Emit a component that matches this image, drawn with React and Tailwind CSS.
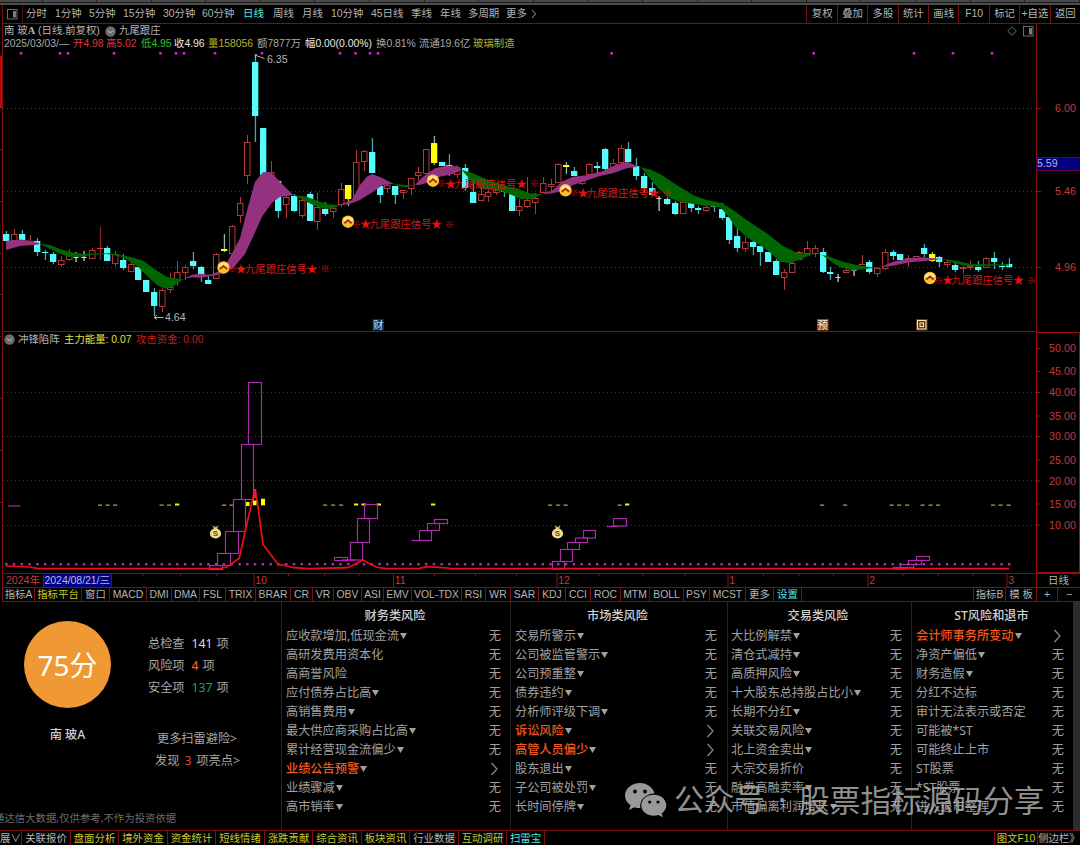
import React from "react";

const CN = "'Liberation Sans', 'Noto Sans CJK SC', sans-serif";

const periods = [
  ["分时", "w-[29px]"],
  ["1分钟", "w-[34px]"],
  ["5分钟", "w-[34px]"],
  ["15分钟", "w-[40px]"],
  ["30分钟", "w-[39px]"],
  ["60分钟", "w-[41px]"],
  ["日线", "w-[30px] text-[#55e6e6]"],
  ["周线", "w-[29px]"],
  ["月线", "w-[29px]"],
  ["10分钟", "w-[40px]"],
  ["45日线", "w-[40px]"],
  ["季线", "w-[29px]"],
  ["年线", "w-[28px]"],
  ["多周期", "w-[38px]"],
  ["更多", "w-[23px]"],
];

const tools = ["复权", "叠加", "多股", "统计", "画线", "F10", "标记", "+自选", "返回"];

const quote = [
  ["2025/03/03/—", "w-[69px] text-[#a8a8a8]"],
  ["开4.98", "w-[33px] text-[#d83a3a]"],
  ["高5.02", "w-[35px] text-[#d83a3a]"],
  ["低4.95", "w-[33px] text-[#2cc42c]"],
  ["收4.96", "w-[34px] text-[#e8e8e8]"],
  ["量158056", "w-[49px] text-[#b4b432]"],
  ["额7877万", "w-[48px] text-[#a8a8a8]"],
  ["幅0.00(0.00%)", "w-[71px] text-[#e8e8e8]"],
  ["换0.81%", "w-[43px] text-[#a8a8a8]"],
  ["流通19.6亿", "w-[54px] text-[#a8a8a8]"],
  ["玻璃制造", "w-[44px] text-[#b4b432]"],
];

const indicators = [
  ["指标A", "w-[32px]"],
  ["指标平台", "w-[47px] text-[#c8c832]"],
  ["窗口", "w-[28px]"],
  ["MACD", "w-[37px]"],
  ["DMI", "w-[25px]"],
  ["DMA", "w-[28px]"],
  ["FSL", "w-[26px]"],
  ["TRIX", "w-[30px]"],
  ["BRAR", "w-[35px]"],
  ["CR", "w-[22px]"],
  ["VR", "w-[21px]"],
  ["OBV", "w-[28px]"],
  ["ASI", "w-[22px]"],
  ["EMV", "w-[28px]"],
  ["VOL-TDX", "w-[50px]"],
  ["RSI", "w-[24px]"],
  ["WR", "w-[25px]"],
  ["SAR", "w-[28px]"],
  ["KDJ", "w-[27px]"],
  ["CCI", "w-[25px]"],
  ["ROC", "w-[30px]"],
  ["MTM", "w-[29px]"],
  ["BOLL", "w-[34px]"],
  ["PSY", "w-[26px]"],
  ["MCST", "w-[36px]"],
  ["更多", "w-[28px]"],
  ["设置", "w-[28px] text-[#55e6e6]"],
];

const footer = [
  ["展∨", "w-[22px]"],
  ["关联报价", "w-[49px]"],
  ["盘面分析", "w-[48px] text-[#c8c832]"],
  ["境外资金", "w-[49px] text-[#c8c832]"],
  ["资金统计", "w-[48px] text-[#c8c832]"],
  ["短线情绪", "w-[49px] text-[#c8c832]"],
  ["涨跌贡献", "w-[48px] text-[#c8c832]"],
  ["综合资讯", "w-[49px] text-[#c8c832]"],
  ["板块资讯", "w-[48px] text-[#c8c832]"],
  ["行业数据", "w-[49px]"],
  ["互动调研", "w-[48px] text-[#c8c832]"],
  ["扫雷宝", "w-[38px] text-[#55e6e6]"],
];

// name, has dropdown arrow, is a warning
const risks = [
  {
    title: "财务类风险",
    box: "w-[229px] pl-[4px] pr-[9px]",
    items: [
      ["应收款增加,低现金流", 1],
      ["高研发费用资本化", 0],
      ["高商誉风险", 0],
      ["应付债券占比高", 1],
      ["高销售费用", 1],
      ["最大供应商采购占比高", 1],
      ["累计经营现金流偏少", 1],
      ["业绩公告预警", 1, 1],
      ["业绩骤减", 1],
      ["高市销率", 1],
    ],
  },
  {
    title: "市场类风险",
    box: "w-[217px] pl-[4px] pr-[10px]",
    items: [
      ["交易所警示", 1],
      ["公司被监管警示", 1],
      ["公司预重整", 1],
      ["债券违约", 1],
      ["分析师评级下调", 1],
      ["诉讼风险", 1, 1],
      ["高管人员偏少", 1, 1],
      ["股东退出", 1],
      ["子公司被处罚", 1],
      ["长时间停牌", 1],
    ],
  },
  {
    title: "交易类风险",
    box: "w-[184px] pl-[3px] pr-[9px]",
    items: [
      ["大比例解禁", 1],
      ["清仓式减持", 1],
      ["高质押风险", 1],
      ["十大股东总持股占比小", 1],
      ["长期不分红", 1],
      ["关联交易风险", 1],
      ["北上资金卖出", 1],
      ["大宗交易折价", 0],
      ["融券高融卖率", 1],
      ["市值偏离利润增长", 1],
    ],
  },
  {
    title: "ST风险和退市",
    box: "w-[162px] pl-[4px] pr-[9px]",
    items: [
      ["会计师事务所变动", 1, 1],
      ["净资产偏低", 1],
      ["财务造假", 1],
      ["分红不达标", 0],
      ["审计无法表示或否定", 0],
      ["可能被*ST", 0],
      ["可能终止上市", 0],
      ["ST股票", 0],
      ["*ST股票", 0],
      ["进入退市整理", 0],
    ],
  },
];

// kind, high, body top, body bottom, low
const candles = [
  ["d", 231, 234, 241, 241],
  ["u", 229, 234, 241, 241],
  ["d", 230, 234, 240, 241],
  ["u", 235, 241, 243, 243],
  ["d", 238, 241, 252, 256],
  ["d", 250, 252, 253, 260],
  ["d", 252, 254, 262, 264],
  ["u", 256, 260, 265, 267],
  ["u", 249, 252, 260, 261],
  ["w", 252, 257, 257, 262],
  ["w", 251, 257, 257, 261],
  ["u", 248, 250, 259, 259],
  ["r", 227, 248, 249, 260],
  ["d", 246, 248, 261, 261],
  ["u", 251, 254, 264, 266],
  ["d", 254, 260, 268, 270],
  ["u", 262, 264, 272, 272],
  ["d", 267, 267, 280, 280],
  ["d", 280, 280, 292, 292],
  ["d", 288, 292, 306, 316],
  ["u", 288, 290, 307, 312],
  ["u", 273, 287, 290, 293],
  ["u", 261, 272, 280, 286],
  ["u", 265, 267, 273, 280],
  ["d", 252, 261, 266, 269],
  ["d", 266, 267, 277, 282],
  ["d", 276, 280, 284, 284],
  ["u", 253, 254, 279, 279],
  ["y", 234, 249, 251, 252],
  ["u", 225, 226, 254, 254],
  ["u", 197, 203, 216, 223],
  ["u", 135, 142, 176, 184],
  ["d", 54, 62, 116, 142],
  ["d", 128, 128, 175, 175],
  ["u", 161, 172, 177, 177],
  ["d", 180, 181, 211, 218],
  ["u", 196, 197, 205, 218],
  ["d", 194, 196, 211, 212],
  ["u", 196, 200, 216, 218],
  ["d", 192, 194, 221, 221],
  ["u", 193, 207, 222, 230],
  ["d", 202, 209, 214, 216],
  ["u", 207, 208, 212, 218],
  ["u", 183, 189, 205, 207],
  ["y", 185, 185, 199, 206],
  ["u", 150, 162, 200, 200],
  ["u", 150, 151, 162, 171],
  ["d", 138, 152, 173, 173],
  ["d", 186, 186, 195, 203],
  ["u", 184, 185, 189, 193],
  ["d", 186, 186, 195, 204],
  ["u", 190, 190, 193, 199],
  ["u", 178, 178, 189, 195],
  ["u", 167, 172, 176, 181],
  ["u", 149, 149, 174, 174],
  ["y", 136, 143, 163, 165],
  ["d", 162, 162, 166, 166],
  ["d", 154, 165, 167, 176],
  ["u", 165, 167, 175, 178],
  ["d", 164, 168, 188, 191],
  ["d", 178, 192, 203, 203],
  ["u", 187, 194, 201, 201],
  ["u", 190, 192, 197, 202],
  ["u", 189, 190, 193, 195],
  ["d", 186, 188, 192, 197],
  ["d", 193, 193, 211, 211],
  ["u", 199, 206, 211, 216],
  ["u", 177, 200, 207, 208],
  ["u", 193, 198, 203, 214],
  ["u", 177, 183, 193, 193],
  ["u", 179, 184, 187, 192],
  ["u", 163, 164, 183, 183],
  ["y", 162, 165, 167, 174],
  ["d", 167, 171, 176, 176],
  ["u", 178, 178, 184, 185],
  ["u", 163, 164, 175, 175],
  ["d", 162, 166, 168, 174],
  ["d", 148, 149, 169, 170],
  ["u", 159, 163, 169, 169],
  ["u", 145, 148, 163, 163],
  ["d", 142, 149, 162, 162],
  ["d", 158, 166, 176, 180],
  ["d", 173, 176, 188, 193],
  ["d", 182, 188, 195, 195],
  ["w", 196, 198, 198, 211],
  ["d", 197, 199, 204, 205],
  ["d", 201, 203, 214, 215],
  ["u", 202, 202, 214, 214],
  ["d", 203, 203, 208, 212],
  ["d", 206, 208, 210, 214],
  ["u", 206, 207, 211, 212],
  ["d", 205, 206, 207, 212],
  ["d", 203, 209, 218, 220],
  ["d", 217, 217, 240, 244],
  ["d", 228, 236, 248, 252],
  ["u", 237, 242, 249, 252],
  ["d", 239, 242, 247, 255],
  ["d", 246, 246, 252, 266],
  ["d", 252, 252, 262, 262],
  ["d", 259, 261, 275, 275],
  ["u", 269, 272, 278, 290],
  ["u", 262, 263, 273, 273],
  ["u", 251, 252, 260, 260],
  ["u", 241, 248, 254, 254],
  ["u", 245, 248, 254, 257],
  ["d", 248, 252, 272, 273],
  ["d", 267, 272, 274, 280],
  ["w", 274, 277, 277, 282],
  ["u", 269, 270, 273, 273],
  ["w", 269, 270, 270, 276],
  ["u", 255, 264, 267, 267],
  ["d", 260, 262, 272, 274],
  ["u", 267, 268, 274, 277],
  ["u", 249, 252, 269, 270],
  ["d", 250, 252, 256, 260],
  ["d", 254, 254, 260, 260],
  ["u", 255, 258, 260, 267],
  ["u", 256, 256, 259, 259],
  ["d", 244, 248, 254, 257],
  ["y", 252, 254, 261, 262],
  ["d", 256, 257, 262, 267],
  ["u", 260, 262, 265, 267],
  ["d", 263, 265, 270, 272],
  ["u", 266, 267, 269, 274],
  ["u", 261, 266, 268, 270],
  ["d", 261, 267, 270, 272],
  ["u", 257, 258, 268, 268],
  ["d", 252, 258, 262, 269],
  ["d", 262, 266, 267, 270],
  ["d", 258, 264, 267, 268],
];

const bands = [
  ["#943280", "6,241 20,239.5 30,240.7 39,243 39,244.5 20,246 6,250"],
  ["#006400", "39,243.5 50,245 60,249 71.7,252.3 83,253.7 110,253.3 130,256.7 143,260.7 157,270.7 167,277 183,279.3 173,286.7 165,288.7 157,285.3 148,276.7 138,266.7 123,257.3 107,254 93,254.7 80,257 68,256.7 58,252.7"],
  ["#943280", "183,279.3 192,274.7 200,273.7 210,274.7 218,271.7 226.7,263.3 240,238.3 248,206.7 255,181.7 263,172.3 270.7,172 280,182 293.3,195 280,197 272,202.7 262,216.7 253,236.7 245,254 233,268.3 217,275 200,277.7 192,277.3"],
  ["#006400", "293.3,195 306.7,196.7 320,201.7 328,204.3 340,205 333,208.7 325,209 313,205 302,199.3"],
  ["#943280", "339,205 351.7,200 360,185 366.7,176.7 372.3,174 381.7,177.7 394,184 383,185 373,191.7 360,200 350,204"],
  ["#006400", "394,184 406.7,185 415,184.7 406.7,187.3 398,186"],
  ["#943280", "415,184.7 423,176.7 435,168.3 446.7,165.7 456.7,166.3 461.7,170 453,174 440,176.7 430,181.7 420,185"],
  ["#006400", "461.7,170 473,173.3 486.7,179.3 503,185 516.7,188.3 530,193.3 541.7,194 531.7,199.3 521.7,199.3 511.7,195 500,190.7 483,189.3 473,182.7"],
  ["#943280", "541.7,194.3 553,190 561.7,181.7 573,176.7 586.7,175.3 603,171 616.7,164.3 628,161.7 638,166.7 626.7,168.3 613,173.3 600,176 583,181.7 573,185 563,190.7 553,193.3"],
  ["#006400", "638,166.7 650,169.3 661.7,175 676.7,185 693,195 706.7,200 721.7,203 733,210 746.7,220 766.7,233.3 783,246 796.7,252.7 813,254.3 803,258.3 790,263.3 780,261.7 771.7,254 760,245 746.7,237.3 735,226.7 728,215.7 720,207.3 706.7,206 693,204 680,201.7 670,198.3 658,188.3 650,178.3 641.7,168.3"],
  ["#006400", "813,254 826.7,255.7 843,261.7 856.7,265 870,267.3 880,267.3 866.7,268.7 853,270.7 840,267.3 830,260.7 822,255"],
  ["#943280", "880,267.3 893,261.7 910,258.3 923,257.3 941.7,259 926.7,260.7 910,262.3 893,265.7"],
  ["#006400", "941.7,258.5 956.7,261 973,264.3 990,264.3 1009,264.3 1009,265.7 993,265.5 976.7,266.7 963,265.3 953,262.7"],
];

const signals = [
  [223.5, 267.5, 268.7],
  [348, 221.7, 224.3],
  [433, 180.7, 183.5],
  [565.5, 190.3, 192.5],
  [930, 278, 280],
];

const eventDots = [21, 60, 68, 114, 160.5, 176, 184, 215, 262, 340, 355.5, 370, 378, 611.7, 813.7, 914, 953, 992];

// x1, y1, x2, y2
const boxes = [
  [248.5, 382.5, 261.5, 444.5],
  [241.5, 444.5, 253.5, 499.5],
  [233.5, 499.5, 245.5, 531.5],
  [225.5, 531.5, 238.5, 553.5],
  [217.5, 553.5, 230.5, 565.5],
  [209.5, 565.5, 222.5, 569.5],
  [334.5, 557.5, 347.5, 560.5],
  [350.5, 542.5, 362.5, 560],
  [357.5, 518.5, 369.5, 542.5],
  [364.5, 504.5, 377.5, 518.5],
  [411.5, 540.5, 420, 540.5],
  [419.5, 530.5, 431.5, 540.5],
  [427.5, 523.5, 439.5, 530.5],
  [434.5, 519.5, 447.5, 523.5],
  [552.5, 561.5, 564.5, 569],
  [560.5, 549.5, 572.5, 561.5],
  [567.5, 542.5, 579.5, 549.5],
  [575.5, 538, 587.5, 542.5],
  [583.5, 530.5, 595.5, 538],
  [606.5, 526.5, 618.5, 526.5],
  [613.5, 518.5, 626.5, 526],
  [893.5, 567.5, 905.5, 569],
  [900.5, 564.5, 913.5, 567.5],
  [908.5, 560.5, 921.5, 564.5],
  [916.5, 556.5, 929.5, 560.5],
  [8, 506, 20.5, 506],
];

const paleDashes = [98, 105.5, 113, 159.5, 167, 222, 229.5, 323, 331, 339, 548, 556, 563.5, 617.5, 820, 843, 889.5, 897, 905, 920.5, 928.5, 936, 991, 998.5, 1006.5];
const brightDashes = [175, 354, 361.5, 376.7, 431, 625];

const axisLabels = [
  ["50.00", 348.5],
  ["45.00", 371.5],
  ["40.00", 392.5],
  ["35.00", 416],
  ["30.00", 436.5],
  ["25.00", 460],
  ["20.00", 481],
  ["15.00", 504],
  ["10.00", 525],
];

const months = [
  ["10", 254],
  ["11", 393.5],
  ["12", 557],
  ["1", 728],
  ["2", 868],
  ["3", 1007],
];
const weekTicks = [143, 180.5, 217, 288.5, 324.5, 359, 434.5, 475.5, 516.5, 599, 643, 685, 763.5, 799, 833.5, 903, 938, 973];

const slot = (i) => 6.3 + i * 7.775;

function Candle({ index, data }) {
  const [kind, high, top, bottom, low] = data;
  const x = Math.round(slot(index));
  const h = Math.max(bottom - top, 1);
  if (kind === "w") {
    return (
      <g fill="#d8d8d8">
        <rect x={x - 0.5} y={high} width="1.2" height={low - high} />
        <rect x={x - 2.5} y={top} width="5" height="1" />
      </g>
    );
  }
  if (kind === "u") {
    return (
      <g stroke="#b43838" fill="none" strokeWidth="1">
        <path d={`M${x + 0.5} ${high}V${top}M${x + 0.5} ${bottom}V${low}`} />
        <rect x={x - 2.5} y={top + 0.5} width="5.5" height={Math.max(h - 1, 1)} />
      </g>
    );
  }
  const body = kind === "y" ? "#ffff00" : kind === "r" ? "#ff3030" : "#54fcfc";
  const wick = kind === "r" ? "#882222" : kind === "y" ? "#8fb8a0" : "#4aa8a8";
  return (
    <g>
      <rect x={x - 0.2} y={high} width="1.3" height={low - high} fill={wick} />
      <rect x={x - 3} y={top} width="6.3" height={h} fill={body} />
    </g>
  );
}

function Signal({ x, y, ty }) {
  return (
    <g>
      <circle cx={x} cy={y} r="6.2" fill="#f6c22c" />
      <path d={`M${x - 5.5} ${y - 1}A5.8 5.8 0 0 1 ${x + 5.5} ${y - 1}Z`} fill="#fbe48c" />
      <path d={`M${x - 3.6} ${y + 1.6}L${x} ${y - 1.6}L${x + 3.6} ${y + 1.6}`} fill="none" stroke="#a02808" strokeWidth="1.8" />
      <g fill="#e81010" fontSize="10.4" fontFamily={CN}>
        <text x={x + 4} y={ty + 3.6} fontSize="9" fontWeight="bold">※</text>
        <text x={x + 12} y={ty + 4} fontSize="11">★</text>
        <text x={x + 21.5} y={ty + 4} textLength="62" fill="#d01818">九尾跟庄信号</text>
        <text x={x + 83} y={ty + 4} fontSize="11">★</text>
        <text x={x + 97} y={ty + 3.6} fontSize="9" fontWeight="bold">※</text>
      </g>
    </g>
  );
}

function PriceChart() {
  return (
    <svg width="1033" height="282" viewBox="3 50 1033 282" className="block">
      {[108.5, 191.5, 267.5].map((y) => (
        <line key={y} x1="3" x2="1036" y1={y} y2={y} stroke="#841a1a" strokeDasharray="1 3" />
      ))}
      {eventDots.map((x) => (
        <rect key={x} x={x - 1.3} y="52" width="2.6" height="2.6" fill="#c828c8" />
      ))}
      {candles.map((c, i) => (
        <Candle key={i} index={i} data={c} />
      ))}
      {bands.map(([color, points]) => (
        <polygon key={points} points={points} fill={color} />
      ))}
      {signals.map(([x, y, ty]) => (
        <Signal key={x} x={x} y={y} ty={ty} />
      ))}
      <g stroke="#b0b0b0" fill="none">
        <path d="M255.5 58V55L257 54.5M256 55.5L264.5 58.5" />
        <path d="M154 317.5H163.5M157 315L154 317.5L157 319.5" />
      </g>
      <g fill="#b4b4b4" fontSize="10.6" fontFamily={CN}>
        <text x="267" y="63.3">6.35</text>
        <text x="165" y="321">4.64</text>
      </g>
      <rect x="372.5" y="319" width="11.5" height="11.5" fill="#0c2c50" />
      <text x="373" y="328.8" fontSize="10.4" fontFamily={CN} fill="#c8e0f4">财</text>
      <rect x="817" y="319" width="11.5" height="11.5" fill="#a04814" />
      <text x="817.5" y="328.8" fontSize="10.4" fontFamily={CN} fill="#fff0dc">预</text>
      <rect x="916" y="319" width="11.5" height="11.5" fill="#6c3c10" />
      <rect x="917.5" y="320.5" width="8.5" height="8.5" fill="none" stroke="#f4e4c4" />
      <rect x="920" y="323" width="3.5" height="3.5" fill="none" stroke="#f4e4c4" />
    </svg>
  );
}

function PriceAxis() {
  return (
    <svg width="44" height="308" viewBox="1036 24 44 308" className="block shrink-0">
      <line x1="1036.5" x2="1036.5" y1="24" y2="332" stroke="#8c1010" />
      {[
        ["6.00", 108.5],
        ["5.46", 191.5],
        ["4.96", 267.5],
      ].map(([label, y]) => (
        <g key={label}>
          <line x1="1036" x2="1041" y1={y} y2={y} stroke="#8c1010" />
          <text x="1076" y={y + 3.8} textAnchor="end" fontSize="10.8" fontFamily={CN} fill="#c43a3a">
            {label}
          </text>
        </g>
      ))}
      <rect x="1036" y="157" width="44" height="14" fill="#64003c" />
      <rect x="1037" y="158" width="43" height="12" fill="#000080" />
      <text x="1037" y="167.4" fontSize="10.6" fontFamily={CN} fill="#b4b4dc">5.59</text>
    </svg>
  );
}

function MoneyBag({ x }) {
  return (
    <g>
      <path d={`M${x - 3} 525.5L${x} 527L${x + 3} 525.5L${x + 1.5} 529H${x - 1.5}Z`} fill="#d8b040" />
      <ellipse cx={x} cy="533.5" rx="5.6" ry="5" fill="#f0dc90" />
      <path d={`M${x - 1.5} 528.5H${x + 1.5}L${x + 4} 531.5H${x - 4}Z`} fill="#f0dc90" />
      <text x={x} y="536.3" textAnchor="middle" fontSize="8" fontWeight="bold" fontFamily={CN} fill="#6c4c28">S</text>
    </g>
  );
}

function EnergyChart() {
  return (
    <svg width="1033" height="226" viewBox="3 347 1033 226" className="block">
      {[392.5, 436.5, 480.5, 525.5].map((y) => (
        <line key={y} x1="3" x2="1036" y1={y} y2={y} stroke="#741818" strokeDasharray="1 3" />
      ))}
      {candles.map((c, i) => (
        <rect key={i} x={slot(i) - 1.2} y="563" width="2.4" height="2.4" fill="#b42cb4" />
      ))}
      {paleDashes.map((x) => (
        <rect key={x} x={x} y="504.5" width="4.2" height="1.3" fill="#a4a440" />
      ))}
      {brightDashes.map((x) => (
        <rect key={x} x={x} y="503.5" width="4.3" height="2" fill="#f4f400" />
      ))}
      <rect x="246" y="502" width="3.5" height="4" fill="#ffff00" />
      <rect x="261" y="498.7" width="4" height="6.6" fill="#ffff00" />
      <g stroke="#ac2cac" strokeWidth="1.15" fill="none">
        {boxes.map(([x1, y1, x2, y2]) =>
          y1 === y2 ? (
            <line key={x1} x1={x1} y1={y1} x2={x2} y2={y2} />
          ) : (
            <rect key={x1} x={x1} y={y1} width={x2 - x1} height={y2 - y1} />
          )
        )}
      </g>
      <line x1="342" x2="355" y1="560" y2="560" stroke="#f000f0" strokeWidth="1.3" />
      <polyline
        points="6,566 30,567 38,568.7 220,568.7 227,567 239.3,558.3 247.3,521.7 255,489.3 257.5,503 263,544.3 278.3,564.7 283.3,565 293.3,567.7 310,568.7 348.3,567.7 362.7,560 376.7,567.3 386.7,568.7 418.6,568.5 427.4,566.7 447,568 451.6,568.7 1009,568.7"
        fill="none"
        stroke="#ec1010"
        strokeWidth="1.7"
      />
      <rect x="253.5" y="489" width="2.8" height="9" fill="#ff1040" />
      <rect x="253" y="500.5" width="3.5" height="4.8" fill="#ffff00" />
      <MoneyBag x={215.5} />
      <MoneyBag x={557.5} />
    </svg>
  );
}

function EnergyAxis() {
  return (
    <svg width="44" height="241" viewBox="1036 332 44 241" className="block shrink-0">
      <rect x="1036.5" y="332.5" width="43" height="240" fill="none" stroke="#a80c0c" />
      {axisLabels.map(([label, y]) => (
        <g key={label}>
          <line x1="1037" x2="1040.5" y1={y} y2={y} stroke="#8c1010" />
          <text x="1076" y={y + 3.8} textAnchor="end" fontSize="10.8" fontFamily={CN} fill="#c43a3a">
            {label}
          </text>
        </g>
      ))}
    </svg>
  );
}

function TimeAxis() {
  return (
    <div className="flex h-[14px] border-t border-[#7c1010]">
      <svg width="1033" height="13" viewBox="3 574 1033 13" className="block">
        <g fontSize="10.6" fontFamily={CN} fill="#c43a3a">
          <text x="6" y="584.3" textLength="34">2024年</text>
          <rect x="43" y="574" width="69" height="13" fill="#000080" />
          <text x="44.5" y="583.8" textLength="65.5" fill="#b8b8e0">2024/08/21/三</text>
          <path d="M43.5 574V587M111.5 574V587" stroke="#6c1010" />
          {weekTicks.map((x) => (
            <line key={x} x1={x} x2={x} y1="574" y2="576" stroke="#8c1010" />
          ))}
          {months.map(([label, x]) => (
            <g key={label}>
              <line x1={x} x2={x} y1="574" y2="587" stroke="#8c1010" />
              <text x={x + 1.2} y="584.3">{label}</text>
            </g>
          ))}
        </g>
      </svg>
      <div className="flex-1 border-l border-[#8c1010] text-center text-[10.4px] leading-[13px]">日线</div>
    </div>
  );
}

function Chevron() {
  return (
    <svg width="9" height="14" viewBox="0 0 9 14" className="mr-[2px]">
      <path d="M1.5 1L7 7L1.5 13" fill="none" stroke="#8c8c8c" strokeWidth="1.2" />
    </svg>
  );
}

function RiskColumn({ title, box, items }) {
  return (
    <div className={`${box} h-full shrink-0 border-l border-[#262626] pt-[4px]`}>
      <div className="mb-px h-[19px] pl-[3px] text-center text-[12.2px] leading-[19px] font-medium text-[#d0d0d0]">{title}</div>
      {items.map(([name, arrow, warn]) => (
        <div key={name} className="flex h-[19px] items-center justify-between text-[12.2px] leading-[19px] whitespace-nowrap">
          <span className="flex items-center">
            <span className={warn ? "font-medium text-[#f0581c]" : ""}>{name}</span>
            {arrow ? (
              <svg width="7" height="6" viewBox="0 0 7 6" className="ml-px">
                <path d="M0 0H7L3.5 6Z" fill="#a0a0a0" />
              </svg>
            ) : null}
          </span>
          {warn ? <Chevron /> : <span>无</span>}
        </div>
      ))}
    </div>
  );
}

function ScorePanel() {
  return (
    <div className="flex h-full w-[281px] shrink-0 flex-col overflow-hidden text-[12.2px] text-[#a8a8a8]">
      <div className="flex h-[205px]">
        <div className="flex w-[135px] flex-col items-center pt-[19px]">
          <div className="flex size-[87px] items-center justify-center rounded-full bg-[#f09833] text-[28px] leading-[32px] text-white">
            75分
          </div>
          <div className="mt-[17px] text-[12.2px] leading-[20px] font-medium text-[#d0d0d0]">南 玻A</div>
        </div>
        <div className="pt-[31px] pl-[13px] leading-[21.8px] whitespace-pre">
          <div>
            总检查<span className="mr-[4px] ml-[7px] text-[#dcdcdc]">141</span>项
          </div>
          <div>
            风险项<span className="mr-[4px] ml-[7px] font-medium text-[#f0581c]">4</span>项
          </div>
          <div>
            安全项<span className="mr-[4px] ml-[7px] text-[#1fa050]">137</span>项
          </div>
          <div className="mt-[30px] pl-[9px]">更多扫雷避险&gt;</div>
          <div className="pl-[7px]">
            发现<span className="mx-[5px] text-[#e04040]">3</span>项亮点&gt;
          </div>
        </div>
      </div>
      <div className="-ml-[6px] text-[10.4px] leading-[23px] whitespace-nowrap text-[#6c6c6c]">
        通达信大数据,仅供参考,不作为投资依据
      </div>
    </div>
  );
}

function Watermark() {
  return (
    <div className="absolute top-[177px] left-[624px] flex items-center whitespace-nowrap text-[#a8a8a8] opacity-85">
      <svg width="43" height="36" viewBox="0 0 43 36">
        <path
          d="M16 1C7.500 1 1 6.600 1 13.600C1 17.600 3.100 21 6.500 23.300L5 28L10.400 25.200C12.300 25.800 14.200 26.100 16.300 26.100C15.200 18.500 21.500 11.700 30.500 11.600C29 5.400 23 1 16 1Z"
          fill="#b4b4b4"
        />
        <path
          d="M30 12.800C22.700 12.800 17.300 17.500 17.300 23.300C17.300 29.200 22.700 33.800 30 33.800C31.500 33.800 33 33.500 34.500 33L38.800 35.300L37.700 31.500C40.500 29.500 42.300 26.600 42.300 23.300C42.300 17.500 36.900 12.800 30 12.800Z"
          fill="#b4b4b4"
        />
        <circle cx="11" cy="9.500" r="1.900" fill="#000" />
        <circle cx="21" cy="9.500" r="1.900" fill="#000" />
        <circle cx="25.700" cy="20" r="1.600" fill="#000" />
        <circle cx="34" cy="20" r="1.600" fill="#000" />
      </svg>
      <span className="ml-[7px] w-[91px] text-[30.3px] leading-[42px]">公众号</span>
      <span className="w-[34px] text-center text-[30px] leading-[42px]">·</span>
      <span className="text-[30.7px] leading-[42px]">股票指标源码分享</span>
    </div>
  );
}

function CollapseIcon() {
  return (
    <svg width="11" height="11" viewBox="0 0 11 11">
      <circle cx="5.5" cy="5.5" r="5.2" fill="#6c6c6c" />
      <path d="M3 4.500L5.500 7L8 4.500" fill="none" stroke="#d0d0d0" />
    </svg>
  );
}

function PaneIcon() {
  return (
    <svg width="11" height="11" viewBox="0 0 11 11">
      <rect x="0.5" y="0.500" width="9.500" height="9.500" fill="none" stroke="#6c6c6c" />
      <rect x="6" y="2" width="3" height="6.500" fill="#7c7c7c" />
    </svg>
  );
}

export default function App() {
  return (
    <div className="flex h-[845px] w-[1080px] flex-col overflow-hidden bg-black font-['Liberation_Sans','Noto_Sans_CJK_SC',sans-serif] text-[10.4px] text-[#b4b4b4]">
      <div className="flex h-[5px] shrink-0 overflow-hidden border-b-2 border-[#4c4c4c] bg-[#484848]">
        {Array.from({ length: 20 }, (_, i) => (
          <div
            key={i}
            className={`h-[3px] shrink-0 border-r border-b border-[#1c1c1c] ${i === 0 ? "w-[42.5px]" : "w-[54.6px]"}`}
          />
        ))}
      </div>

      <div className="flex h-[597px] shrink-0">
        <svg width="3" height="597" viewBox="0 5 3 597" className="block shrink-0">
          <rect x="2" y="5" width="1" height="597" fill="#7c1010" />
          <rect x="0" y="56" width="2" height="52" fill="#c00808" />
          <path d="M0 149.500H2M0 201.500H2M0 253.500H2M0 294.500H2M0 336.500H2M0 398.500H2M0 450.500H2M0 502.500H2" stroke="#7c1010" />
        </svg>

        <div className="flex w-[1077px] flex-col">
          <div className="flex h-[19px] shrink-0 items-stretch border-b border-[#7c1010] leading-[18px] whitespace-nowrap">
            <div className="flex w-[20px] items-center border-r border-[#4c1010] pl-[4px]">
              <PaneIcon />
            </div>
            <div className="flex flex-1 pl-[3px]">
              {periods.map(([label, cls]) => (
                <span key={label} className={`${cls} shrink-0`}>
                  {label}
                </span>
              ))}
              <svg width="6" height="10" viewBox="0 0 6 10" className="mt-[4px] ml-[2px]">
                <path d="M1 1L4.500 5L1 9" fill="none" stroke="#a0a0a0" />
              </svg>
            </div>
            {tools.map((label) => (
              <div key={label} className="w-[30.4px] border-l border-[#7c1010] text-center">
                {label}
              </div>
            ))}
          </div>

          <div className="flex h-[308px] shrink-0">
            <div className="w-[1033px] border-b border-[#7c1010]">
              <div className="flex h-[14px] items-center leading-[14px]">
                <span className="w-[102px] pl-px whitespace-nowrap">
                  南 玻<b className="font-['Liberation_Serif',serif]">A</b> (日线.前复权)
                </span>
                <CollapseIcon />
                <span className="ml-[3px] flex-1">九尾跟庄</span>
                <svg width="10" height="10" viewBox="0 0 10 10" className="mr-[6px]">
                  <path d="M5 0.700L9.300 5L5 9.300L0.700 5Z" fill="none" stroke="#6c6c6c" />
                </svg>
                <span className="mr-[2px]">
                  <PaneIcon />
                </span>
              </div>
              <div className="flex h-[12px] pl-px leading-[11px]">
                {quote.map(([label, cls]) => (
                  <span key={label} className={`${cls} shrink-0 whitespace-nowrap`}>
                    {label}
                  </span>
                ))}
              </div>
              <PriceChart />
            </div>
            <PriceAxis />
          </div>

          <div className="flex h-[241px] shrink-0">
            <div className="w-[1033px]">
              <div className="flex h-[15px] items-center pl-[1px] leading-[14px] whitespace-nowrap">
                <CollapseIcon />
                <span className="ml-[3px] w-[46px]">冲锋陷阵</span>
                <span className="w-[72px] text-[#e0e040]">主力能量: 0.07</span>
                <span className="text-[#c81c1c]">攻击资金: 0.00</span>
              </div>
              <EnergyChart />
            </div>
            <EnergyAxis />
          </div>

          <TimeAxis />

          <div className="flex h-[15px] shrink-0 border-y border-[#7c1010] leading-[13px] whitespace-nowrap">
            {indicators.map(([label, cls]) => (
              <div key={label} className={`${cls} flex shrink-0 justify-center border-r border-[#7c1010]`}>
                {label}
              </div>
            ))}
            <div className="flex-1" />
            <div className="flex w-[32px] justify-center border-l border-[#7c1010]">指标B</div>
            <div className="flex w-[31px] justify-center border-l border-[#7c1010]">模 板</div>
            <div className="flex w-[21px] justify-center border-l border-[#7c1010]">+</div>
            <div className="flex w-[23px] justify-center border-l border-[#7c1010]">−</div>
          </div>
        </div>
      </div>

      <div className="relative flex h-[228px] shrink-0 font-['Noto_Sans','Noto_Sans_CJK_SC',sans-serif] text-[#a0a0a0]">
        <ScorePanel />
        {risks.map((r) => (
          <RiskColumn key={r.title} {...r} />
        ))}
        <div className="flex-1 bg-[#2a2c30]" />
        <Watermark />
      </div>

      <div className="flex h-[15px] shrink-0 border-t border-[#7c1010] leading-[15px] whitespace-nowrap">
        {footer.map(([label, cls]) => (
          <div key={label} className={`${cls} flex shrink-0 justify-center border-r border-[#7c1010]`}>
            {label}
          </div>
        ))}
        <div className="flex-1" />
        <div className="flex w-[43px] justify-center border-l border-[#7c1010] text-[#c8c832]">图文F10</div>
        <div className="flex w-[43px] justify-center border-l border-[#7c1010]">侧边栏》</div>
      </div>
    </div>
  );
}
